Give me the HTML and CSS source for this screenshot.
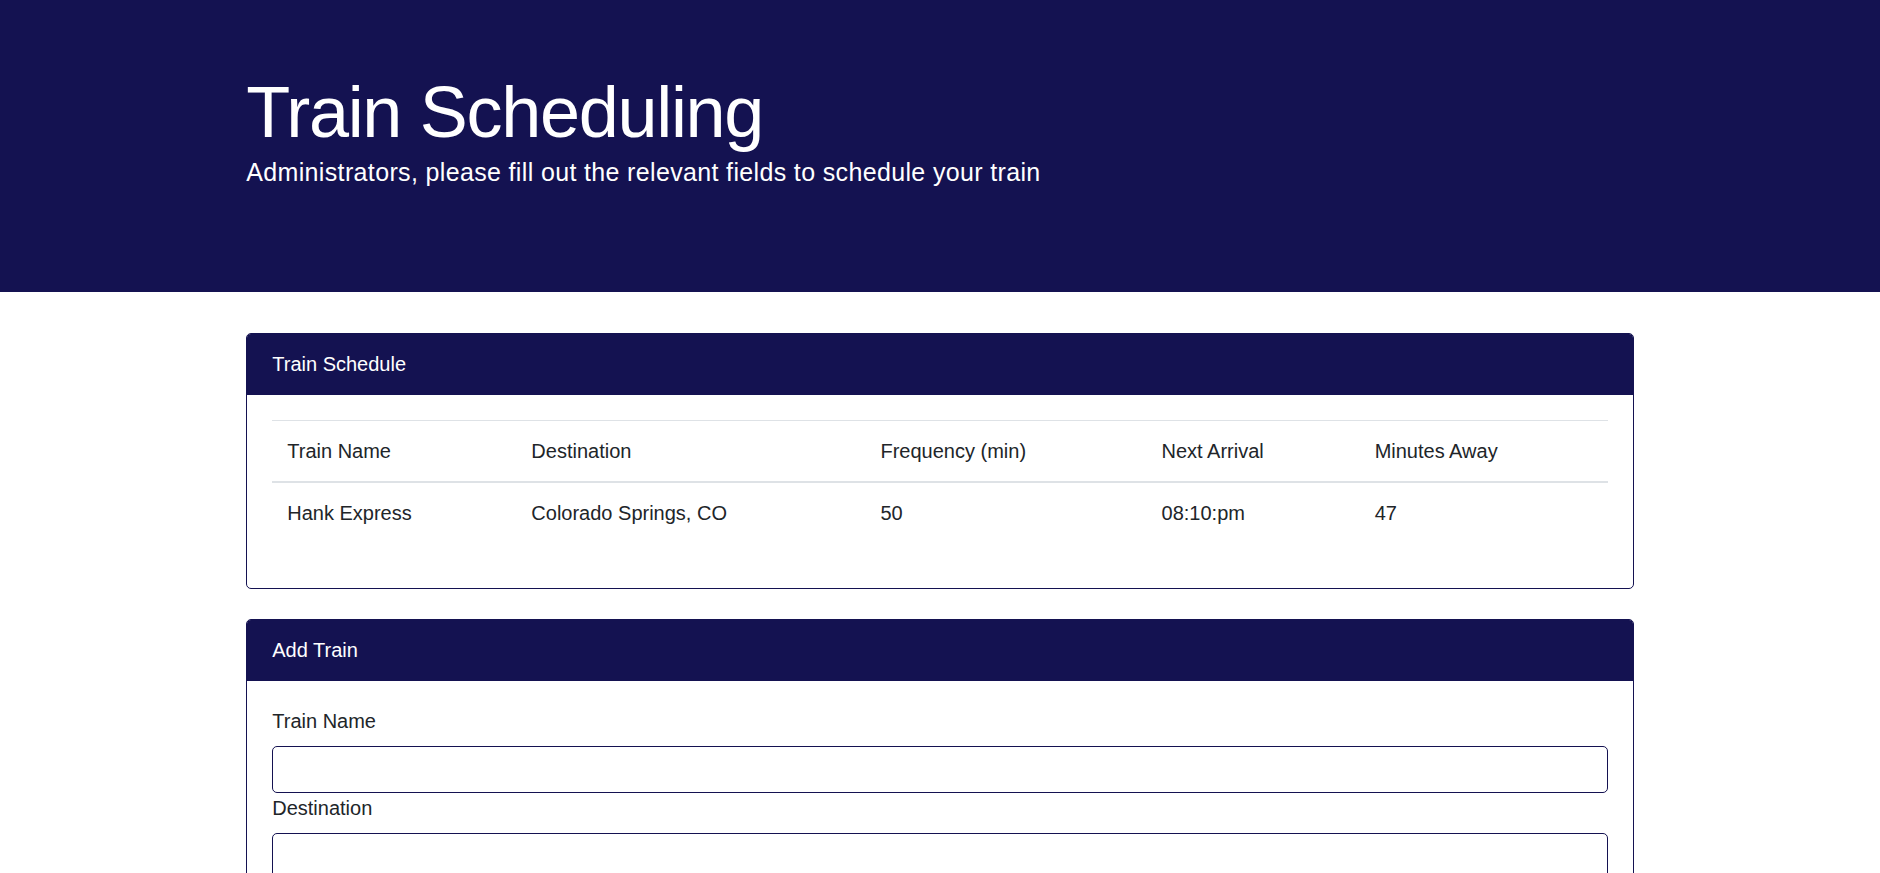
FILE: index.html
```html
<!DOCTYPE html>
<html lang="en">
<head>
<meta charset="utf-8">
<title>Train Scheduling</title>
<link rel="stylesheet" href="styles.css">
</head>
<body>
<header class="jumbotron">
  <div class="container">
    <h1 class="display">Train Scheduling</h1>
    <p class="lead">Administrators, please fill out the relevant fields to schedule your train</p>
  </div>
</header>
<main class="container">
  <section class="card">
    <div class="card-header">Train Schedule</div>
    <div class="card-body">
      <table class="table">
        <colgroup>
          <col class="c1"><col class="c2"><col class="c3"><col class="c4"><col class="c5">
        </colgroup>
        <thead>
          <tr>
            <th>Train Name</th>
            <th>Destination</th>
            <th>Frequency (min)</th>
            <th>Next Arrival</th>
            <th>Minutes Away</th>
          </tr>
        </thead>
        <tbody>
          <tr>
            <td>Hank Express</td>
            <td>Colorado Springs, CO</td>
            <td>50</td>
            <td>08:10:pm</td>
            <td>47</td>
          </tr>
        </tbody>
      </table>
    </div>
  </section>
  <section class="card">
    <div class="card-header">Add Train</div>
    <div class="card-body">
      <form class="form">
        <label class="label" for="name">Train Name</label>
        <input class="input" id="name" type="text">
        <label class="label" for="dest">Destination</label>
        <input class="input" id="dest" type="text">
      </form>
    </div>
  </section>
</main>
</body>
</html>
```

FILE: styles.css
```css
* { box-sizing: border-box; }
html, body { margin: 0; padding: 0; }
body {
  font-family: "Liberation Sans", Arial, sans-serif;
  font-size: 20px;
  line-height: 1.5;
  color: #212529;
  background: #fff;
}
.container {
  width: 1425px;
  margin: 0 auto;
  padding: 0 18.75px;
}
.jumbotron {
  background: #141251;
  color: #fff;
  padding: 70px 0 100.5px;
  margin-bottom: 41px;
}
.display {
  margin: 0;
  font-size: 72px;
  font-weight: 300;
  line-height: 84px;
  letter-spacing: -1.3px;
}
.lead {
  margin: 0;
  font-size: 25px;
  line-height: 37.5px;
  letter-spacing: 0.35px;
}
.card {
  border: 1px solid #141251;
  border-radius: 5px;
  margin-bottom: 30px;
  overflow: hidden;
  background: #fff;
}
.card-header {
  background: #141251;
  color: #fff;
  padding: 15px 25px;
  line-height: 30px;
  font-size: 20px;
  border-bottom: 1px solid #141251;
}
.card-body {
  padding: 25px;
}
.table {
  width: 100%;
  border-collapse: collapse;
  margin-bottom: 20px;
}
.table th, .table td {
  padding: 15px;
  text-align: left;
  font-weight: 400;
  border-top: 1px solid #dee2e6;
  vertical-align: top;
  line-height: 30px;
}
.table thead th { border-bottom: 2px solid #dee2e6; }
.c1 { width: 244px; }
.c2 { width: 349px; }
.c3 { width: 281px; }
.c4 { width: 213px; }
.c5 { width: 248px; }
.form { display: flex; flex-direction: column; }
.label {
  display: block;
  margin-bottom: 10px;
  line-height: 30px;
}
.input {
  display: block;
  width: 100%;
  height: 47px;
  padding: 7.5px 15px;
  font: inherit;
  border: 1px solid #141251;
  border-radius: 5px;
  background: #fff;
  color: #495057;
}
```
